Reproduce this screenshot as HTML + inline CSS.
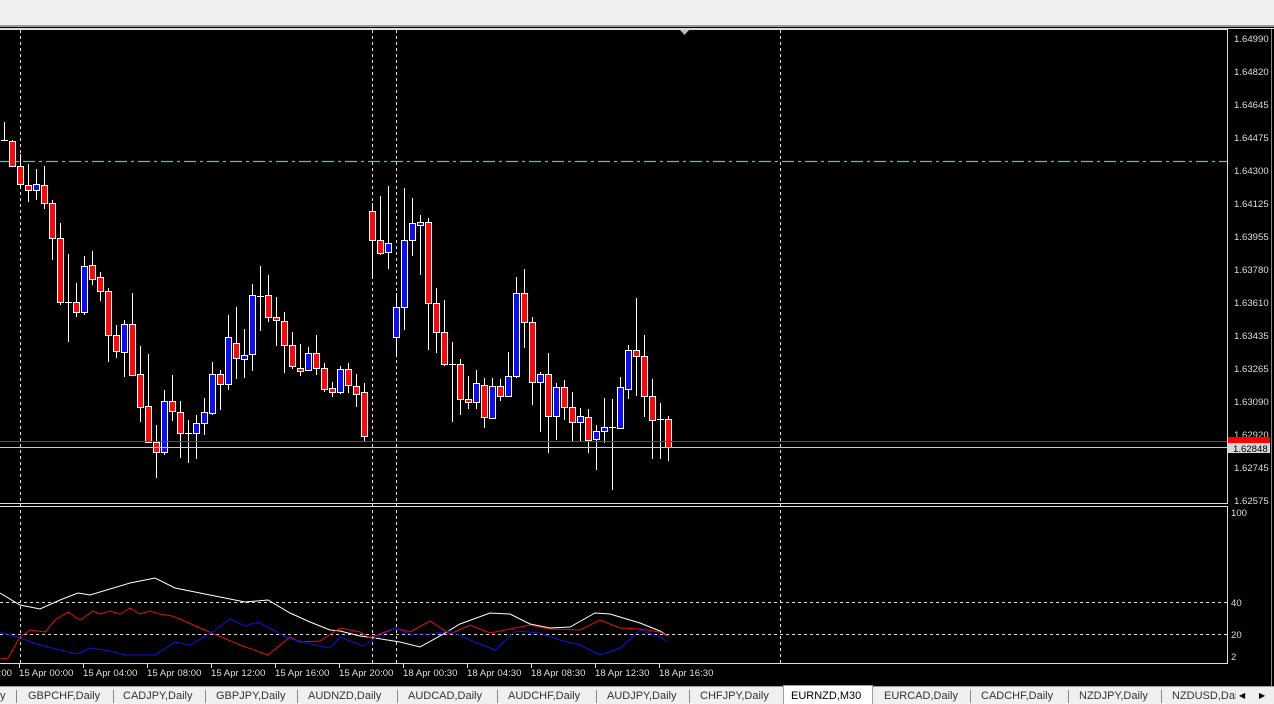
<!DOCTYPE html>
<html><head><meta charset="utf-8">
<style>
html,body{margin:0;padding:0;width:1274px;height:703px;overflow:hidden;background:#000;font-family:"Liberation Sans",Tahoma,sans-serif}
#top{position:absolute;left:0;top:0;width:1274px;height:25px;background:#f0f0f0}
#tabs{position:absolute;left:0;top:686px;width:1274px;height:17px;background:#f0f0f0;border-top:1px solid #a0a0a0;font-size:11px;color:#333}
.tab{position:absolute;top:1px;height:16px;line-height:16px;white-space:nowrap}
.sep{position:absolute;top:3px;width:1px;height:13px;background:#888}
</style></head><body>
<div id="top"></div>
<svg id="s" width="1274" height="686" style="position:absolute;left:0;top:0" font-family="Liberation Sans, sans-serif" font-size="9.6">
<rect x="0" y="25" width="1274" height="2" fill="#9a9a9a"/>
<rect x="0" y="28" width="1274" height="1" fill="#d8d8d8"/>
<rect x="1271" y="29" width="1" height="657" fill="#888"/>
<polygon points="680,30 689,30 684.5,35" fill="#bbb"/>
<g stroke="#ddd" stroke-width="1" stroke-dasharray="3,3">
<line x1="20.5" y1="30" x2="20.5" y2="663"/>
<line x1="372.5" y1="30" x2="372.5" y2="663"/>
<line x1="396.5" y1="30" x2="396.5" y2="663"/>
<line x1="780.5" y1="30" x2="780.5" y2="663"/>
<line x1="0" y1="602.5" x2="1227" y2="602.5"/>
<line x1="0" y1="634.5" x2="1227" y2="634.5"/>
</g>
<line x1="0" y1="161.5" x2="1227" y2="161.5" stroke="#48c0d8" stroke-width="1.3" stroke-dasharray="12,4,3,4"/>
<g id="c"></g>
<line x1="0" y1="441.5" x2="1227" y2="441.5" stroke="#e01010"/>
<line x1="0" y1="447.5" x2="1227" y2="447.5" stroke="#c8c8c8"/>
<polyline fill="none" stroke="#fff" points="0,593 20,605 40,609 60,600 78,593 90,595 110,589 130,583 155,578 175,588 195,592 220,597 245,602 268,600 290,613 310,622 330,630 340,631 360,636 375,638 400,642 420,647 440,636 460,624 490,613 510,614 530,624 550,628 570,627 595,613 610,614 640,623 660,631 668,636"/>
<polyline fill="none" stroke="#e01010" points="0,659 8,658 20,637 30,630 45,632 55,620 68,612 80,620 93,611 100,614 110,611 120,614 130,608 140,614 150,611 160,614 172,616 180,619 200,628 240,645 268,655 290,637 300,642 320,641 340,628 360,632 370,638 395,628 410,632 430,621 450,634 470,625 490,633 510,629 530,625 550,629 580,630 600,620 620,628 640,629 660,632 668,636"/>
<polyline fill="none" stroke="#1010e0" points="0,632 20,638 40,645 60,650 77,654 90,648 110,651 125,655 155,655 175,642 190,645 215,630 230,619 245,626 258,622 275,631 290,639 300,641 315,645 330,648 340,637 363,646 375,638 395,628 410,634 430,634 450,631 470,640 495,650 515,631 540,633 560,640 580,645 600,655 620,648 640,630 660,637 668,642"/>
<g stroke="#ddd" fill="none">
<polyline points="0,29.5 1227.5,29.5 1227.5,503.5 0,503.5"/>
<polyline points="0,506.5 1227.5,506.5 1227.5,663.5 0,663.5"/>
</g>
<g fill="#ddd">
<text x="1234" y="42">1.64990</text><text x="1234" y="75">1.64820</text><text x="1234" y="108">1.64645</text><text x="1234" y="141">1.64475</text><text x="1234" y="174">1.64300</text><text x="1234" y="207">1.64125</text><text x="1234" y="240">1.63955</text><text x="1234" y="273">1.63780</text><text x="1234" y="306">1.63610</text><text x="1234" y="339">1.63435</text><text x="1234" y="372">1.63265</text><text x="1234" y="405">1.63090</text><text x="1234" y="438">1.62920</text><text x="1234" y="471">1.62745</text><text x="1234" y="504">1.62575</text>
<text x="1231" y="516">100</text><text x="1231" y="606">40</text><text x="1231" y="638">20</text><text x="1231" y="660">2</text>
</g>
<rect x="1228" y="437" width="42" height="6" fill="#f00"/>
<rect x="1228" y="443" width="42" height="10" fill="#d8d8d8"/>
<text x="1233" y="452" fill="#000">1.62848</text>
<g stroke="#ddd" id="ticks"></g>
<g fill="#ddd">
<text x="-12" y="676">00:00</text>
<text x="19" y="676">15 Apr 00:00</text><text x="83" y="676">15 Apr 04:00</text><text x="147" y="676">15 Apr 08:00</text><text x="211" y="676">15 Apr 12:00</text><text x="275" y="676">15 Apr 16:00</text><text x="339" y="676">15 Apr 20:00</text><text x="403" y="676">18 Apr 00:30</text><text x="467" y="676">18 Apr 04:30</text><text x="531" y="676">18 Apr 08:30</text><text x="595" y="676">18 Apr 12:30</text><text x="659" y="676">18 Apr 16:30</text>
</g>
</svg>
<div id="tabs">
<div class="tab" style="left:0">y</div><div class="sep" style="left:16px"></div>
<div class="tab" style="left:28px">GBPCHF,Daily</div><div class="sep" style="left:113px"></div>
<div class="tab" style="left:123px">CADJPY,Daily</div><div class="sep" style="left:205px"></div>
<div class="tab" style="left:216px">GBPJPY,Daily</div><div class="sep" style="left:297px"></div>
<div class="tab" style="left:308px">AUDNZD,Daily</div><div class="sep" style="left:397px"></div>
<div class="tab" style="left:408px">AUDCAD,Daily</div><div class="sep" style="left:497px"></div>
<div class="tab" style="left:508px">AUDCHF,Daily</div><div class="sep" style="left:596px"></div>
<div class="tab" style="left:607px">AUDJPY,Daily</div><div class="sep" style="left:689px"></div>
<div class="tab" style="left:700px">CHFJPY,Daily</div>
<div style="position:absolute;top:-2px;height:19px;background:#fff;border:1px solid #a0a0a0;border-bottom:none;box-sizing:border-box;left:783px;width:90px"></div>
<div class="tab" style="left:791px;color:#000">EURNZD,M30</div>
<div class="tab" style="left:884px">EURCAD,Daily</div><div class="sep" style="left:970px"></div>
<div class="tab" style="left:981px">CADCHF,Daily</div><div class="sep" style="left:1068px"></div>
<div class="tab" style="left:1079px">NZDJPY,Daily</div><div class="sep" style="left:1161px"></div>
<div class="tab" style="left:1172px;width:64px;overflow:hidden">NZDUSD,Daily</div>
<div class="tab" style="left:1239px;font-size:8px;color:#000">&#9664;</div>
<div class="tab" style="left:1259px;font-size:8px;color:#000">&#9654;</div>
</div>
<script>
var d=[[140,140,122,141],[141,166,140,167],[166,184,154,187],[185,190,164,202],[190,184,169,200],[185,203,166,209],[203,238,200,260],[238,302,223,305],[302,302,254,342],[302,312,283,317],[312,266,256,315],[265,279,251,285],[277,291,272,301],[291,335,288,362],[335,351,325,358],[352,324,320,377],[324,375,293,375],[374,407,346,422],[406,442,354,442],[442,452,425,478],[452,401,390,455],[401,411,375,421],[412,433,401,458],[433,433,420,463],[433,423,415,459],[423,412,398,435],[413,374,362,415],[374,384,370,410],[384,337,315,390],[343,358,307,379],[359,355,329,378],[354,295,284,371],[296,296,266,331],[295,317,275,322],[317,320,297,346],[321,345,312,373],[345,366,332,369],[368,371,344,376],[370,353,347,371],[353,368,335,375],[368,389,363,392],[388,392,382,397],[392,369,366,394],[369,385,363,393],[386,394,374,407],[392,436,383,441],[211,240,203,278],[240,253,196,255],[252,243,186,269],[337,307,293,357],[307,240,188,330],[240,223,198,256],[225,222,215,275],[222,303,218,350],[303,332,288,353],[332,364,300,366],[364,364,342,422],[364,399,359,415],[399,402,376,409],[402,383,370,409],[385,417,378,428],[418,386,378,418],[386,396,379,401],[396,376,352,396],[376,293,277,378],[293,322,269,348],[322,382,317,405],[382,374,372,432],[374,416,353,453],[416,387,383,440],[387,407,380,420],[407,422,392,441],[422,416,408,441],[417,440,409,453],[439,431,425,470],[431,427,398,443],[427,427,399,490],[428,387,377,428],[389,350,345,399],[350,356,298,396],[356,396,335,417],[396,420,379,459],[419,419,403,459],[419,447,416,461]];
var g=document.getElementById('c'),h='';
d.forEach(function(c,i){var x=4+8*i,o=c[0],cl=c[1];
h+='<line x1="'+(x+.5)+'" y1="'+c[2]+'" x2="'+(x+.5)+'" y2="'+c[3]+'" stroke="#fff"/>';
if(o==cl){h+='<line x1="'+(x-3)+'" y1="'+(o+.5)+'" x2="'+(x+4)+'" y2="'+(o+.5)+'" stroke="#fff"/>';}
else{var t=Math.min(o,cl),b=Math.max(o,cl),col=cl>o?'#e81010':'#1010e0';
h+='<rect x="'+(x-2.5)+'" y="'+(t+.5)+'" width="6" height="'+(b-t)+'" fill="'+col+'" stroke="#fff"/>';}
});
g.innerHTML=h;
var tk='';[19,83,147,211,275,339,403,467,531,595,659].forEach(function(x){tk+='<line x1="'+(x+.5)+'" y1="664" x2="'+(x+.5)+'" y2="668"/>';});
document.getElementById('ticks').innerHTML=tk;
</script>
</body></html>
